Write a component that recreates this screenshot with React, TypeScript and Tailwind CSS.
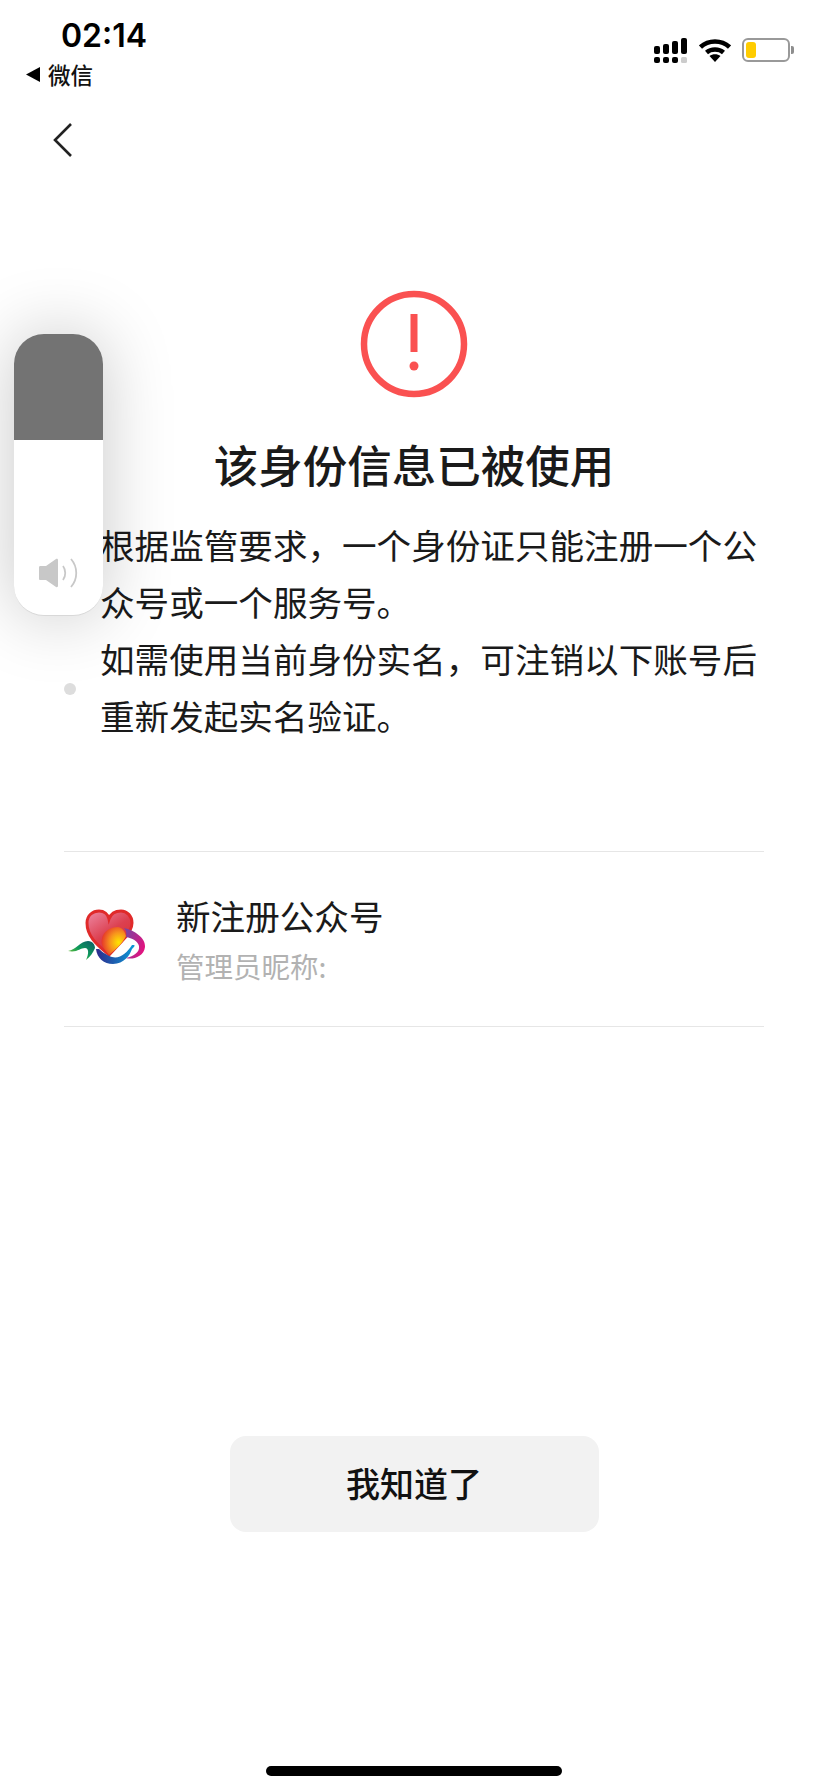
import React from 'react';

const cjk = { fontFamily: '"Noto Sans CJK SC", sans-serif' };

const SignalIcon = () => (
  <svg width="34" height="26" viewBox="0 0 34 26" className="block">
    <rect x="0" y="8" width="6" height="8" rx="2" fill="#000" />
    <rect x="9" y="6" width="6" height="10" rx="2" fill="#000" />
    <rect x="18" y="3" width="6" height="13" rx="2" fill="#000" />
    <rect x="27" y="0" width="6" height="16" rx="2" fill="#000" />
    <rect x="0" y="19" width="6" height="6" rx="2" fill="#000" />
    <rect x="9" y="19" width="6" height="6" rx="2" fill="#000" />
    <rect x="18" y="19" width="6" height="6" rx="2" fill="#000" />
    <rect x="27" y="19" width="6" height="6" rx="1.5" fill="#ccc" />
  </svg>
);

const WifiIcon = () => (
  <svg width="32" height="24" viewBox="0 0 32 24" className="block">
    <path d="M1.500 9 C9.500 1.500 22.500 1.500 30.500 9" fill="none" stroke="#000" strokeWidth="4.500" />
    <path d="M7.500 14.500 C12 10.500 20 10.500 24.500 14.500" fill="none" stroke="#000" strokeWidth="4.500" />
    <path d="M16 24 L10.500 18 C13.500 15.700 18.500 15.700 21.500 18 Z" fill="#000" />
  </svg>
);

const BatteryIcon = () => (
  <div className="flex items-center">
    <div className="w-[48px] h-[24px] rounded-[6px] border-2 border-[#999999] p-[2px] bg-white">
      <div className="w-[10px] h-full rounded-[3px] bg-[#ffcc00]" />
    </div>
    <div className="w-[3px] h-[8px] rounded-r-[2px] bg-[#8e8e8e] ml-[1px]" />
  </div>
);

const Logo = () => (
  <svg width="86" height="88" viewBox="0 0 86 88" className="block">
    <defs>
      <linearGradient id="heart" x1="0" y1="0" x2="0.7" y2="1">
        <stop offset="0" stopColor="#ee8aa6" />
        <stop offset="0.55" stopColor="#dc4050" />
        <stop offset="1" stopColor="#d9302f" />
      </linearGradient>
      <radialGradient id="core" cx="0.7" cy="0.55" r="0.7">
        <stop offset="0" stopColor="#ffe600" />
        <stop offset="0.5" stopColor="#f7941d" />
        <stop offset="1" stopColor="#e5352b" />
      </radialGradient>
      <linearGradient id="swoosh" x1="0" y1="0" x2="1" y2="0">
        <stop offset="0" stopColor="#2e2a8c" />
        <stop offset="1" stopColor="#0a9ad8" />
      </linearGradient>
      <linearGradient id="ring" x1="0" y1="0" x2="1" y2="0.5">
        <stop offset="0" stopColor="#6a4aa8" />
        <stop offset="1" stopColor="#e0147f" />
      </linearGradient>
      <linearGradient id="leaf" x1="0" y1="1" x2="1" y2="0">
        <stop offset="0" stopColor="#a8d520" />
        <stop offset="0.5" stopColor="#0d9a5a" />
        <stop offset="1" stopColor="#0d5a6a" />
      </linearGradient>
    </defs>
    <path d="M45 60 C36 52 23 43 23 28 C23 20 29 16 35 16 C40 16 44 19 45 24 C47 18 52 16 57 16 C63 16 68 21 68 28 C68 35 63 41 58 46 Z" fill="url(#heart)" stroke="#e02a2a" strokeWidth="3" />
    <path d="M45 60 C40 54 36 50 38 43 C40 36 46 32 54 32 C59 33 61 37 62 41 C59 48 52 54 45 60 Z" fill="url(#core)" />
    <path d="M32 54 C33 63 40 69 49 69 C60 69 66 60 68 54 C72 50 71 50 68 50 C63 58 56 64 48 62 C42 60 37 56 35 54 Z" fill="url(#swoosh)" />
    <path d="M60 33 C70 35 82 43 81 52 C80 62 68 65 62 63 C70 61 76 57 75 51 C74 46 68 43 62 42 C63 38 62 35 60 33 Z" fill="url(#ring)" />
    <path d="M4 56 C12 55 16 46 24 46 C29 46 31 50 31 53 C29 58 26 62 22 65 C25 59 25 53 21 53 C16 53 13 58 4 56 Z" fill="url(#leaf)" />
  </svg>
);

const App = () => {
  return (
    <div className="relative w-[828px] h-[1792px] bg-white overflow-hidden flex flex-col" style={cjk}>
      {/* status bar */}
      <div className="h-[94px] flex justify-between shrink-0">
        <div className="pl-[26px] pt-[17px]">
          <div className="pl-[35px] text-[32px] leading-[38px] font-semibold text-black" style={{ fontFamily: 'Inter, sans-serif' }}>
            02:14
          </div>
          <div className="flex items-center gap-[8px] mt-[5px]">
            <svg width="14" height="15" viewBox="0 0 14 15">
              <path d="M0 7.500 L14 0 L14 15 Z" fill="#000" />
            </svg>
            <span className="text-[22.500px] leading-[28px] font-medium text-[#111111]">微信</span>
          </div>
        </div>
        <div className="flex items-start gap-[11px] pt-[38px] pr-[34px]">
          <SignalIcon />
          <WifiIcon />
          <BatteryIcon />
        </div>
      </div>

      {/* nav */}
      <div className="h-[196px] pl-[52px] pt-[28px] shrink-0">
        <svg width="22" height="36" viewBox="0 0 22 36" className="block">
          <path d="M19 2 L3 18 L19 34" fill="none" stroke="#222222" strokeWidth="2.600" />
        </svg>
      </div>

      {/* result icon + title */}
      <div className="flex flex-col items-center shrink-0">
        <svg width="108" height="108" viewBox="0 0 108 108" className="block">
          <circle cx="54" cy="54" r="50" fill="none" stroke="#fa5151" strokeWidth="6.500" />
          <rect x="50.500" y="24" width="7" height="38" fill="#fa5151" />
          <circle cx="54" cy="76" r="4.500" fill="#fa5151" />
        </svg>
        <h1 className="mt-[33px] text-[44.500px] leading-[66px] font-medium text-[#1a1a1a]">该身份信息已被使用</h1>
      </div>

      {/* body */}
      <div className="flex px-[64px] mt-[19px] shrink-0">
        <div className="w-[12px] h-[12px] rounded-full bg-[#dddddd] mt-[167px] mr-[24px] shrink-0" />
        <p className="text-[34.600px] leading-[57px] text-[#1a1a1a] w-[670px]">
          根据监管要求，一个身份证只能注册一个公众号或一个服务号。
          <br />
          如需使用当前身份实名，可注销以下账号后重新发起实名验证。
        </p>
      </div>

      {/* account row */}
      <div className="mx-[64px] mt-[107px] h-[176px] border-y border-[#e6e6e6] flex items-center shrink-0">
        <Logo />
        <div className="ml-[26px]">
          <div className="text-[34.600px] leading-[50px] text-[#1a1a1a] -mt-[2px]">新注册公众号</div>
          <div className="text-[28.500px] leading-[40px] text-[#b2b2b2] mt-[6px]">管理员昵称:</div>
        </div>
      </div>

      {/* button */}
      <div className="flex justify-center mt-[409px] shrink-0">
        <div className="w-[369px] h-[96px] pb-[3px] rounded-[16px] bg-[#f2f2f2] flex items-center justify-center text-[34px] font-medium text-[#111111]">
          我知道了
        </div>
      </div>

      {/* home indicator */}
      <div className="flex justify-center mt-auto pb-[16px]">
        <div className="w-[296px] h-[10px] rounded-full bg-black" />
      </div>

      {/* volume hud */}
      <div className="absolute left-[14px] top-[334px] w-[89px] h-[282px] rounded-[30px] bg-white overflow-hidden flex flex-col border-b border-[#d8d8d8] shadow-[0_0_70px_rgba(0,0,0,0.22)]">
        <div className="h-[106px] bg-[#737373] shrink-0" />
        <div className="flex-1 flex items-end justify-center pb-[27px]">
          <svg width="40" height="30" viewBox="0 0 40 30" className="block">
            <path d="M0 9 C0 8 1 8 2 8 L7 8 L17 1 C18 0.500 19 1 19 2 L19 28 C19 29 18 29.500 17 29 L7 22 L2 22 C1 22 0 22 0 21 Z" fill="#c8c8c8" />
            <path d="M24 8 C27 12 27 18 24 22" fill="none" stroke="#c8c8c8" strokeWidth="1.800" />
            <path d="M32 1 C39 9 39 21 32 29" fill="none" stroke="#c8c8c8" strokeWidth="1.800" />
          </svg>
        </div>
      </div>
    </div>
  );
};

export default App;
